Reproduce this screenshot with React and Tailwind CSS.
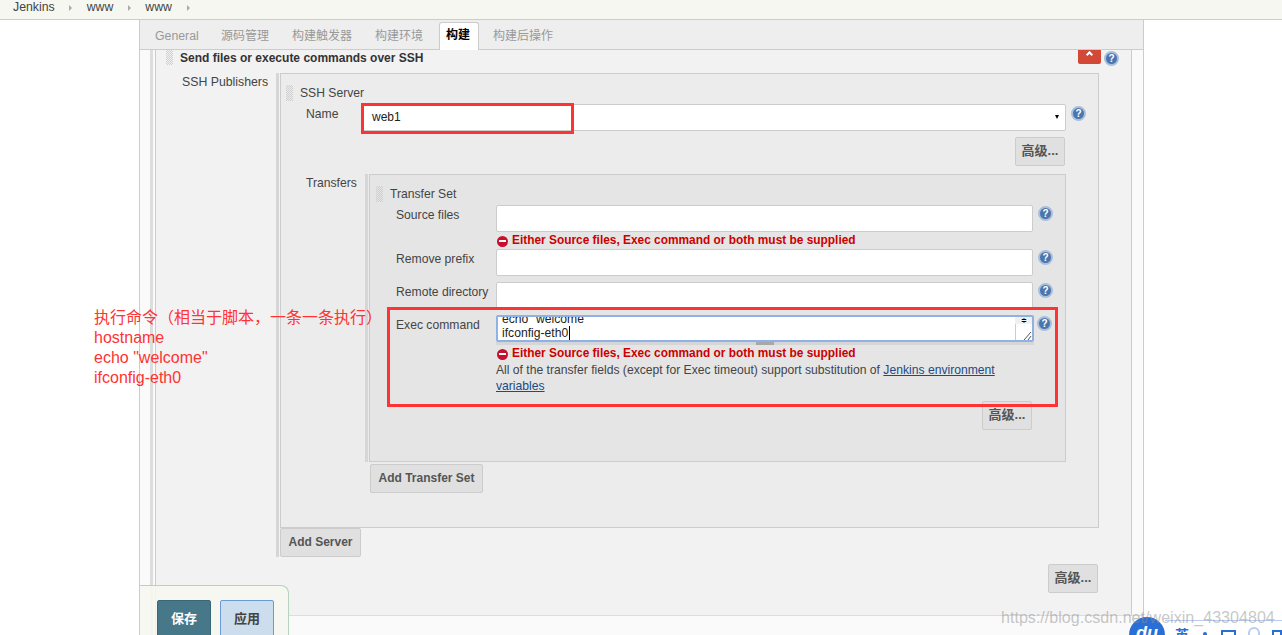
import React from 'react';

const cjk = "font-['Liberation_Sans','Noto_Sans_CJK_SC',sans-serif]";

// --- small pieces ---
function Help({ className = '' }) {
  return (
    <div className={`w-[15px] h-[15px] rounded-full bg-[#4a76ad] border-2 border-[#a9bedb] text-white text-[10px] leading-[11px] font-bold text-center shrink-0 ${className}`}>?</div>
  );
}

function Handle({ className = '' }) {
  return (
    <div className={`w-[7px] bg-[conic-gradient(#cfcfcf_25%,transparent_0_50%,#cfcfcf_0_75%,transparent_0)] bg-[length:2px_2px] shrink-0 ${className}`} />
  );
}

function Btn({ children, className = '' }) {
  return (
    <div className={`flex items-center justify-center pb-[1px] bg-[#e0e0e0] border border-[#cccccc] rounded-[2px] text-[#555] font-bold text-[12px] ${className}`}>{children}</div>
  );
}

function Advanced({ className = '' }) {
  return <Btn className={`w-[50px] h-[29px] text-[13px] ${className}`}>高级...</Btn>;
}

function Field({ children, className = '' }) {
  return <div className={`bg-white border border-[#cccccc] rounded-[2px] ${className}`}>{children}</div>;
}

function ErrorLine() {
  return (
    <div className="flex items-center gap-[4px] h-[14px] text-[#cc0000] font-bold text-[11.9px] whitespace-nowrap">
      <div className="w-[11px] h-[11px] rounded-full bg-[#c8102e] flex items-center justify-center">
        <div className="w-[7px] h-[2px] bg-white" />
      </div>
      Either Source files, Exec command or both must be supplied
    </div>
  );
}

function TransferRow({ label, children }) {
  return (
    <div className="flex">
      <div className="w-[126px] pl-[26px] pt-[1px] text-[12.15px] text-[#444] whitespace-nowrap">{label}</div>
      {children}
    </div>
  );
}

function Tabs() {
  const tabs = ['General', '源码管理', '构建触发器', '构建环境', '构建', '构建后操作'];
  return (
    <div className="h-[30px] bg-[#eeeeee] border-b border-[#cccccc] flex items-end gap-[23px] pl-[15px] text-[12px]">
      {tabs.map(t => {
        if (t === '构建') {
          return <div key={t} className="-ml-[7px] -mr-[9px] pl-[6px] pr-[8px] h-[28px] -mb-px bg-white border border-b-0 border-[#cccccc] rounded-t-[3px] font-bold text-black leading-[25px]">{t}</div>;
        }
        if (t === 'General') {
          return <div key={t} className="w-[43px] h-[26px] leading-[26px] text-[#999] text-[12.3px] whitespace-nowrap">{t}</div>;
        }
        return <div key={t} className="h-[26px] leading-[26px] text-[#999]">{t}</div>;
      })}
    </div>
  );
}

function TransferSet() {
  return (
    <div className="w-[697px] h-[288px] border border-[#cccccc] bg-[#e5e5e5] pt-[11px]">
      <div className="flex h-[16px] pl-[6px]">
        <Handle className="h-[16px]" />
        <span className="ml-[7px] text-[12.15px] text-[#444] leading-[16px]">Transfer Set</span>
      </div>
      <div className="mt-[3px]">
        <TransferRow label="Source files">
          <Field className="w-[537px] h-[27px]" />
          <Help className="ml-[5px] mt-[1px]" />
        </TransferRow>
        <div className="pl-[127px] pt-[2px] h-[17px]"><ErrorLine /></div>
        <TransferRow label="Remove prefix">
          <Field className="w-[537px] h-[27px]" />
          <Help className="ml-[5px] mt-[1px]" />
        </TransferRow>
        <div className="mt-[6px]">
          <TransferRow label="Remote directory">
            <Field className="w-[537px] h-[27px]" />
            <Help className="ml-[5px] mt-[1px]" />
          </TransferRow>
        </div>
        <div className="mt-[6px]">
          <TransferRow label="Exec command">
            <div className="w-[538px]">
              <div className="relative h-[27px] bg-white border-2 border-[#8fb1e6] rounded-[2px] flex flex-col justify-end overflow-hidden pl-[4px] text-[12.15px] leading-[14px] text-[#222]">
                <div className="whitespace-nowrap">echo "welcome"</div>
                <div className="whitespace-nowrap"><span className="border-r border-black pr-px">ifconfig-eth0</span></div>
                <div className="absolute right-0 top-0 w-[17px] h-[7px] bg-[#f0f0f0] text-[7px] leading-[7px] text-center text-black">≑</div>
                <div className="absolute right-0 top-[7px] w-[17px] h-[18px] border-l border-[#cccccc] overflow-hidden">
                  <svg width="16" height="18" viewBox="0 0 16 18"><path d="M8 16l7-8M12 16l3-4" stroke="#555" strokeWidth="1" fill="none" /></svg>
                </div>
              </div>
              <div className="h-[3px] bg-[#d6d6d6] flex justify-center"><div className="w-[18px] h-[3px] bg-[#a8a8a8]" /></div>
            </div>
            <Help className="ml-[3px] mt-[1px]" />
          </TransferRow>
        </div>
        <div className="pl-[127px] pt-[2px]">
          <ErrorLine />
          <div className="w-[530px] -ml-px mt-[1px] text-[12.15px] leading-[16px] text-[#444]">
            All of the transfer fields (except for Exec timeout) support substitution of <span className="underline text-[#204a87]">Jenkins environment variables</span>
          </div>
        </div>
        <div className="flex justify-end pr-[33px] mt-[7px]"><Advanced className="h-[28px]" /></div>
      </div>
    </div>
  );
}

function SshServer() {
  return (
    <div className="w-[819px] h-[455px] border border-[#cccccc] bg-[#ececec] pt-[11px]">
      <div className="flex h-[16px] pl-[5px]">
        <Handle className="h-[16px]" />
        <span className="ml-[7px] text-[12.15px] text-[#444] leading-[16px]">SSH Server</span>
      </div>
      <div className="flex mt-[3px]">
        <div className="w-[80px] pl-[25px] pt-[1px] text-[12.15px] text-[#444]">Name</div>
        <Field className="w-[705px] h-[27px] flex items-center justify-between pl-[10px] pr-[6px] pb-[2px] text-[12px] text-[#222]">
          web1
          <span className="w-0 h-0 border-x-[2.5px] border-x-transparent border-t-[4px] border-t-black" />
        </Field>
        <Help className="ml-[5px] mt-[2px]" />
      </div>
      <div className="flex justify-end w-[784px] mt-[6px]"><Advanced /></div>
      <div className="flex mt-[8px]">
        <div className="w-[59px] ml-[25px] text-[12.15px] text-[#444]">Transfers</div>
        <div className="w-[3px] h-[288px] bg-[#d6d6d6] mr-[1px]" />
        <TransferSet />
      </div>
      <div className="mt-[2px] pl-[89px]">
        <Btn className="w-[113px] h-[29px]">Add Transfer Set</Btn>
      </div>
    </div>
  );
}

function Panel() {
  return (
    <div className="flex-1 bg-[#f2f2f2] border-l border-r border-[#cccccc] h-[585px] overflow-hidden">
      <div className="flex h-[15px] pl-[10px]">
        <Handle className="h-[15px]" />
        <span className="ml-[7px] font-bold text-[12px] leading-[16px] text-[#333]">Send files or execute commands over SSH</span>
        <div className="ml-auto flex">
          <div className="w-[23px] h-[14px] bg-[#d34836] rounded-b-[2px] flex justify-center">
            <div className="w-[5px] h-[5px] border-t-2 border-l-2 border-white rotate-45 mt-[2px]" />
          </div>
          <Help className="ml-[3px] mt-[1px] mr-[12px]" />
        </div>
      </div>
      <div className="flex mt-[8px]">
        <div className="w-[120px] pl-[26px] text-[12.3px] text-[#444] whitespace-nowrap">SSH Publishers</div>
        <div className="w-[3px] h-[484px] bg-[#d6d6d6] mr-[1px]" />
        <div>
          <SshServer />
          <Btn className="w-[81px] h-[29px]">Add Server</Btn>
          <div className="flex justify-end w-[818px] mt-[7px]"><Advanced /></div>
        </div>
      </div>
    </div>
  );
}

export default function App() {
  return (
    <div className={`relative w-[1282px] h-[635px] overflow-hidden bg-white ${cjk}`}>
      {/* breadcrumbs */}
      <div className="h-[20px] bg-[#f5f7f0] border-b border-[#cccccc] flex items-center pl-[13px] text-[12.3px] text-[#444] pb-[4px]">
        {['Jenkins', 'www', 'www'].map((b, i) => (
          <React.Fragment key={i}>
            <span>{b}</span>
            <span className="mx-[14.5px] w-0 h-0 border-y-[3px] border-y-transparent border-l-[3px] border-l-[#aaa]" />
          </React.Fragment>
        ))}
      </div>

      <div className="flex">
        <div className="w-[139px]" />
        <div className="w-[1005px] border-x border-[#cccccc]">
          <Tabs />
          <div className="flex h-[585px] bg-[#fafafa]">
            <div className="w-[10px]" />
            <div className="w-[3px] bg-[#dddddd]" />
            <div className="w-[2px]" />
            <div className="flex-1 min-w-0 flex">
              <Panel />
            </div>
            <div className="w-[11px]" />
          </div>
        </div>
      </div>

      {/* footer line behind the save bar */}
      <div className="absolute left-[289px] top-[615px] w-[854px] h-[20px] bg-[#fafafa] border-t border-[#dddddd]" />

      {/* save bar */}
      <div className="absolute left-[140px] top-[585px] w-[149px] h-[50px] bg-[#f5f7f0]/90 border border-l-0 border-b-0 border-[#b5d3bd] rounded-tr-[8px] flex gap-[9px] pl-[17px] pt-[14px]">
        <div className="w-[54px] h-[40px] bg-[#46788a] border border-[#3a6678] rounded-t-[2px] text-white font-bold text-[13px] text-center leading-[36px]">保存</div>
        <div className="w-[54px] h-[40px] bg-[#ccdded] border border-[#6b9bd6] rounded-t-[2px] text-[#444] font-bold text-[13px] text-center leading-[36px]">应用</div>
      </div>

      {/* annotation drawn on the screenshot */}
      <div className="absolute left-[387px] top-[307px] w-[671px] h-[100px] border-[3px] border-[#ff3333]" />
      <div className="absolute left-[361px] top-[103px] w-[213px] h-[31px] border-[3px] border-[#ff3333]" />
      <div className="absolute left-[94px] top-[308px] text-[16px] leading-[20px] text-[#ff3333] whitespace-nowrap">
        <div>执行命令（相当于脚本，一条一条执行）</div>
        <div>hostname</div>
        <div>echo "welcome"</div>
        <div>ifconfig-eth0</div>
      </div>

      {/* ime toolbar */}
      <div className="absolute left-[1165px] top-[620px] w-[117px] h-[15px] bg-white border-t border-[#b8cdf0] flex items-start pl-[10px] text-[#2a6fd6] text-[14px] leading-[16px] font-bold">
        <span className="mt-[6px]">英</span>
        <span className="w-[4px] h-[4px] rounded-full bg-[#2a6fd6] mt-[11px] ml-[14px]" />
        <span className="w-[15px] h-[12px] border-2 border-[#2a6fd6] mt-[9px] ml-[14px]" />
        <span className="w-[13px] h-[13px] rounded-full border-2 border-[#b8cdf0] mt-[6px] ml-[12px]" />
        <span className="w-[10px] h-[12px] border-2 border-[#2a6fd6] mt-[9px] ml-[12px]" />
      </div>
      <div className="absolute left-[1129px] top-[617px] w-[36px] h-[36px] rounded-full bg-[#2a6fd6] text-white italic font-bold text-[18px] leading-[32px] text-center">du</div>

      {/* watermark */}
      <div className="absolute left-[1001px] top-[607px] text-[16.1px] leading-[20px] text-[#8f8f8f]/50 whitespace-nowrap">https://blog.csdn.net/weixin_43304804</div>
    </div>
  );
}
